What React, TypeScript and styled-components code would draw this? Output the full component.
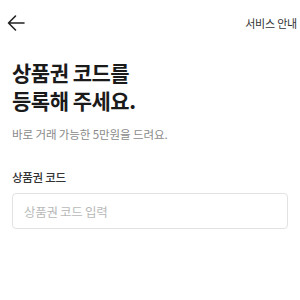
import React, { useState } from 'react';
import styled, { createGlobalStyle } from 'styled-components';

const GlobalStyle = createGlobalStyle`
  body {
    margin: 0;
    background: #ffffff;
    font-family: "Noto Sans CJK KR", "Noto Sans", sans-serif;
    color: #222222;
  }
`;

const Page = styled.div`
  width: 300px;
  height: 300px;
  background: #ffffff;
  overflow: hidden;
`;

const Header = styled.header`
  display: flex;
  align-items: center;
  justify-content: space-between;
  height: 45px;
  padding: 0 3px 0 6px;
`;

const BackButton = styled.button`
  display: flex;
  align-items: center;
  justify-content: center;
  width: 20px;
  height: 20px;
  padding: 0;
  border: none;
  background: none;
  color: #222222;
  cursor: pointer;
`;

const HeaderLink = styled.a`
  font-size: 11px;
  color: #333333;
  text-decoration: none;
  letter-spacing: -0.2px;
`;

const Content = styled.main`
  padding: 13px 12px 0;
`;

const Title = styled.h1`
  margin: 0;
  font-size: 21px;
  line-height: 28px;
  font-weight: 700;
  color: #1a1a1a;
  letter-spacing: -0.5px;
`;

const Subtitle = styled.p`
  margin: 12px 0 0;
  font-size: 11.5px;
  line-height: 16px;
  color: #8a8a8a;
  letter-spacing: -0.1px;
`;

const FormGroup = styled.div`
  margin-top: 27px;
`;

const FormLabel = styled.label`
  display: block;
  font-size: 11.5px;
  line-height: 16px;
  font-weight: 500;
  color: #333333;
  margin-bottom: 8px;
  letter-spacing: -0.3px;
`;

const CodeInput = styled.input`
  box-sizing: border-box;
  width: 100%;
  height: 36px;
  padding: 0 11px;
  border: 1px solid #e2e2e2;
  border-radius: 4px;
  font-family: inherit;
  font-size: 12.5px;
  color: #222222;
  outline: none;
  letter-spacing: -0.3px;

  &::placeholder {
    color: #b8b8b8;
  }
`;

const BackIcon = () => (
  <svg width="18" height="18" viewBox="0 0 18 18" fill="none">
    <path d="M17 9H1.5M8.5 2L1.5 9l7 7" stroke="currentColor" strokeWidth="1.6" strokeLinecap="round" strokeLinejoin="round" />
  </svg>
);

const App: React.FC = () => {
  const [code, setCode] = useState('');

  return (
    <Page>
      <GlobalStyle />
      <Header>
        <BackButton aria-label="뒤로">
          <BackIcon />
        </BackButton>
        <HeaderLink href="#">서비스 안내</HeaderLink>
      </Header>
      <Content>
        <Title>
          상품권 코드를
          <br />
          등록해 주세요.
        </Title>
        <Subtitle>바로 거래 가능한 5만원을 드려요.</Subtitle>
        <FormGroup>
          <FormLabel>상품권 코드</FormLabel>
          <CodeInput
            type="text"
            placeholder="상품권 코드 입력"
            value={code}
            onChange={(e) => setCode(e.target.value)}
          />
        </FormGroup>
      </Content>
    </Page>
  );
};

export default App;
